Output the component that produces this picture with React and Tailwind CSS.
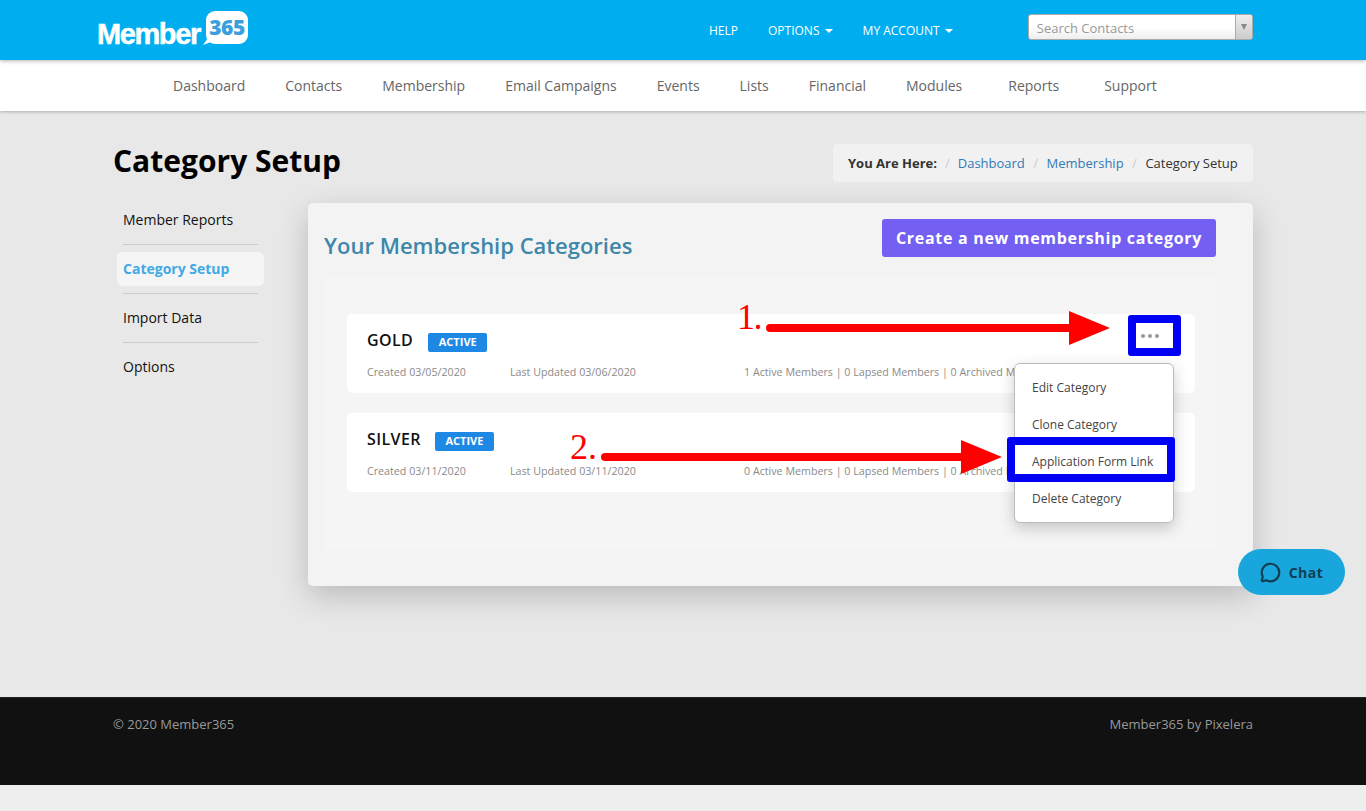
import { MessageCircle } from "lucide-react";

const navItems = ["Dashboard", "Contacts", "Membership", "Email Campaigns", "Events", "Lists", "Financial", "Modules"];
const sideItems = ["Member Reports", "Category Setup", "Import Data", "Options"];
const menuItems = ["Edit Category", "Clone Category", "Application Form Link", "Delete Category"];

const categories = [
  { name: "GOLD", created: "03/05/2020", updated: "03/06/2020", active: 1, badge: "ml-[15px]" },
  { name: "SILVER", created: "03/11/2020", updated: "03/11/2020", active: 0, badge: "ml-[14px]" },
];

function Caret() {
  return <span className="ml-[2px] inline-block h-0 w-0 border-x-4 border-t-4 border-x-transparent border-t-white align-middle" />;
}

function Logo() {
  return (
    <div className="relative flex h-[60px] w-[160px] items-start">
      <span className="-ml-px mt-[17px] font-['Liberation_Sans',sans-serif] text-[29px] leading-[34px] font-bold tracking-[-1.4px] text-white [-webkit-text-stroke:0.5px_white]">Member</span>
      <div className="absolute top-[11px] left-[108px] flex h-[33px] w-[42px] items-center justify-center rounded-[9px] bg-white font-['Open_Sans',sans-serif] text-[21px] leading-none font-extrabold tracking-[-0.5px] text-[#3a9fdc]">
        365
      </div>
      <svg className="absolute top-[38px] left-[105px]" width="12" height="8" viewBox="0 0 12 8">
        <path d="M0 7 L5 0 L11 3 Z" fill="#fff" />
      </svg>
    </div>
  );
}

function Arrow({ width, height, className }) {
  const mid = height / 2;
  return (
    <svg className={className} width={width} height={height} viewBox={`0 0 ${width} ${height}`}>
      <line x1="5" y1={mid} x2={width - 40} y2={mid} stroke="#f00" strokeWidth="8" strokeLinecap="round" />
      <path d={`M${width - 41} 0 L${width} ${mid} L${width - 41} ${height} Z`} fill="#f00" />
    </svg>
  );
}

function CategoryCard({ cat }) {
  return (
    <div className="h-[79px] rounded-[5px] bg-white pt-[14px] pr-4 pl-5">
      <div className="flex h-[24px] items-center">
        <span className="text-[16px] leading-6 font-semibold tracking-[0.4px] text-[#111]">{cat.name}</span>
        <span className={`${cat.badge} mt-[4px] flex h-[19px] w-[59px] items-center justify-center rounded-[2px] bg-[#1e88e5] text-[11px] font-bold text-white`}>ACTIVE</span>
      </div>
      <div className="mt-[12px] flex text-[10.7px] leading-4 text-[#8a8a8a]">
        <span className="w-[143px]">Created {cat.created}</span>
        <span className="w-[234px]">Last Updated {cat.updated}</span>
        <span>{cat.active} Active Members | 0 Lapsed Members | 0 Archived Members</span>
      </div>
    </div>
  );
}

export default function App() {
  return (
    <div className="relative flex h-[811px] flex-col overflow-hidden bg-[#e8e8e8] font-['Open_Sans',sans-serif]">
      <header className="relative z-20 flex h-[60px] bg-[#00aeef] pl-[98px] shadow-[0_1px_4px_rgba(0,0,0,0.3)]">
        <Logo />
        <nav className="ml-[451px] flex h-[60px] items-center gap-[30px] pt-[1px] text-[12px] text-white">
          <span>HELP</span>
          <span>OPTIONS <Caret /></span>
          <span>MY ACCOUNT <Caret /></span>
        </nav>
        <div className="mt-[14px] ml-[75px] flex h-[26px] w-[225px] overflow-hidden rounded-[3px] border border-[#aaa] bg-gradient-to-b from-white from-50% to-[#eee]">
          <span className="flex-1 pt-px pl-2 text-[13px] leading-[24px] text-[#999]">Search Contacts</span>
          <span className="flex w-[17px] items-center justify-center border-l border-[#aaa] bg-gradient-to-b from-[#eee] to-[#ccc]">
            <span className="h-0 w-0 border-x-[3.5px] border-t-[6px] border-x-transparent border-t-[#888]" />
          </span>
        </div>
      </header>

      <nav className="relative z-10 flex h-[51px] items-center bg-white pl-[173px] text-[14px] text-[#666] shadow-[0_1px_3px_rgba(0,0,0,0.25)]">
        <div className="flex gap-10">
          {navItems.map((item) => <span key={item}>{item}</span>)}
        </div>
        <span className="ml-[46px]">Reports</span>
        <span className="ml-[45px]">Support</span>
      </nav>

      <main className="mx-auto flex h-[586px] w-[1140px] flex-col">
        <div className="flex h-[92px] items-start justify-between pt-[33px]">
          <h1 className="-mt-px text-[30px] leading-[36px] font-bold text-black">Category Setup</h1>
          <div className="flex h-[38px] w-[420px] items-center rounded-[4px] bg-[#f1f1f1] pt-px pl-[15px] text-[13px] text-[#333]">
            <span className="font-bold">You Are Here:</span>
            <span className="mx-[8px] text-[#ccc]">/</span>
            <span className="text-[#337ab7]">Dashboard</span>
            <span className="mx-[8.5px] text-[#ccc]">/</span>
            <span className="text-[#337ab7]">Membership</span>
            <span className="mx-[8.5px] text-[#ccc]">/</span>
            <span>Category Setup</span>
          </div>
        </div>

        <div className="flex">
          <aside className="-mt-[7px] ml-[4px] w-[191px]">
            {sideItems.map((item, i) => (
              <div key={item}>
                {i > 0 && <div className="mr-[50px] ml-[6px] h-px bg-[#ccc]" />}
                {item === "Category Setup" ? (
                  <div className="my-[7px] h-[34px] w-[147px] rounded-[5px] bg-[#f5f5f5] pl-[6px] text-[14px] leading-[34px] font-bold text-[#3fa9e6]">{item}</div>
                ) : (
                  <div className="h-[48px] pl-[6px] text-[14px] leading-[48px] text-[#111]">{item}</div>
                )}
              </div>
            ))}
          </aside>

          <section className="h-[383px] w-[945px] rounded-[5px] bg-[#f3f3f3] px-4 pt-4 shadow-[0_10px_30px_rgba(0,0,0,0.2)]">
            <div className="flex h-[58px] items-start justify-between pr-[21px]">
              <h2 className="mt-[9px] text-[22px] leading-[34px] font-semibold text-[#3f87a8]">Your Membership Categories</h2>
              <button className="h-[38px] w-[334px] rounded-[3px] bg-[#7360f2] text-[16px] font-bold tracking-[0.7px] text-white">Create a new membership category</button>
            </div>
            <div className="flex h-[273px] w-[893px] flex-col gap-5 rounded-[6px] bg-[#f5f5f5] pt-[37px] pr-[22px] pl-[23px]">
              {categories.map((cat) => <CategoryCard key={cat.name} cat={cat} />)}
            </div>
          </section>
        </div>
      </main>

      <footer className="flex h-[88px] justify-between border-t border-[#222] bg-[#111] px-[113px] pt-[17px] text-[13px] leading-[18px] text-[#999]">
        <span>© 2020 Member365</span>
        <span>Member365 by Pixelera</span>
      </footer>
      <div className="flex-1 bg-[#eee]" />

      {/* dropdown + annotations sit over the cards */}
      <div className="absolute top-[363px] left-[1014px] z-30 flex h-[160px] w-[160px] flex-col rounded-[6px] border border-[#bbb] bg-white pt-[5px] pl-px text-[12px] text-[#444] shadow-[0_5px_15px_rgba(0,0,0,0.2)]">
        {menuItems.map((item) => <div key={item} className="h-[37px] pl-4 leading-[37px]">{item}</div>)}
      </div>

      <div className="absolute top-[315px] left-[1128px] z-40 flex h-[41px] w-[53px] items-center justify-center rounded-[3px] border-[8px] border-[#0000f5] bg-white pr-[9px] text-[#999]">
        <span className="flex gap-[3px]">
          <span className="h-1 w-1 rounded-full bg-[#999]" />
          <span className="h-1 w-1 rounded-full bg-[#999]" />
          <span className="h-1 w-1 rounded-full bg-[#999]" />
        </span>
      </div>
      <div className="absolute top-[437px] left-[1007px] z-40 h-[45px] w-[168px] rounded-[3px] border-[8px] border-[#0000f5]" />

      <span className="absolute top-[296px] left-[737px] z-40 font-['Liberation_Serif',serif] text-[36px] leading-[42px] tracking-[-1.5px] text-[#f00]">1.</span>
      <Arrow width={345} height={34} className="absolute top-[311px] left-[765px] z-40" />
      <span className="absolute top-[426px] left-[570px] z-40 font-['Liberation_Serif',serif] text-[36px] leading-[42px] text-[#f00]">2.</span>
      <Arrow width={402} height={34} className="absolute top-[440px] left-[600px] z-40" />

      <button className="absolute top-[549px] left-[1238px] z-50 flex h-[46px] w-[107px] items-center justify-center gap-[8px] rounded-full bg-[#18a6dc] text-[14px] font-bold tracking-[0.5px] text-[#123e52]">
        <MessageCircle size={21} strokeWidth={2.5} />
        Chat
      </button>
    </div>
  );
}
